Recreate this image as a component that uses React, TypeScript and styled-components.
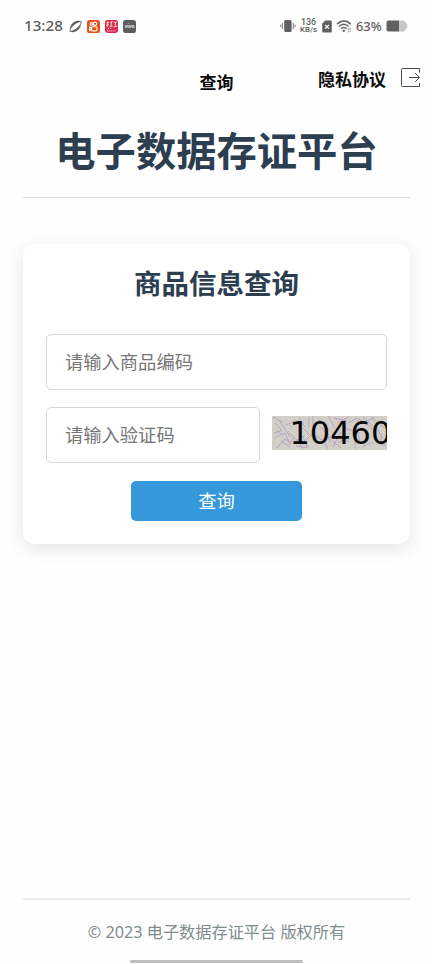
import React from "react";
import styled, { createGlobalStyle } from "styled-components";

const GlobalStyle = createGlobalStyle`
  * { box-sizing: border-box; }
  body { margin: 0; background: #fefefe; }
`;

const Screen = styled.div`
  width: 432px;
  height: 964px;
  display: flex;
  flex-direction: column;
  overflow: hidden;
  background: #fefefe;
  font-family: "Noto Sans", "Noto Sans CJK SC", sans-serif;
`;

const StatusBar = styled.header`
  height: 52px;
  padding: 0 24px 0 24px;
  display: flex;
  align-items: center;
  justify-content: space-between;
  color: #5c5c5c;
`;

const StatusGroup = styled.div<{ $gap: number }>`
  display: flex;
  align-items: center;
  gap: ${(p) => p.$gap}px;
  svg { display: block; flex: none; }
`;

const Clock = styled.span`
  font-size: 15.2px;
  line-height: 20px;
  font-weight: 500;
  width: 40px;
  padding-bottom: 2px;
  white-space: nowrap;
`;

const Speed = styled.div`
  width: 19px;
  display: flex;
  flex-direction: column;
  align-items: center;
  margin-left: -1px;
  font-family: Roboto, sans-serif;
  font-weight: 500;
  white-space: nowrap;
`;

const SpeedLine = styled.span<{ $size: number }>`
  display: block;
  height: 8px;
  font-size: ${(p) => p.$size}px;
  line-height: 8px;
`;

const Percent = styled.span`
  font-size: 12.9px;
  line-height: 18px;
  font-weight: 500;
  width: 26px;
  white-space: nowrap;
`;

const NavBar = styled.nav`
  height: 54px;
  padding: 0 11px 0 12px;
  display: grid;
  grid-template-columns: 1fr auto 1fr;
  font-family: "Noto Sans CJK SC", sans-serif;
  font-size: 17px;
  line-height: 24px;
  font-weight: 700;
  color: #0a0a0a;
`;

const NavTitle = styled.span`
  grid-column: 2;
  padding: 18px 0 0;
`;

const NavActions = styled.div`
  display: flex;
  justify-content: flex-end;
  gap: 15px;
  padding-top: 15px;
  white-space: nowrap;
  svg { display: block; flex: none; }
`;

const Page = styled.main`
  flex: 1;
  display: flex;
  flex-direction: column;
  padding: 0 22px 0 23px;
  font-family: "Noto Sans CJK SC", sans-serif;
`;

const Title = styled.h1`
  margin: 0;
  height: 92px;
  padding-top: 14px;
  border-bottom: 1px solid #dcdcdc;
  text-align: center;
  font-size: 40.3px;
  line-height: 58px;
  font-weight: 700;
  color: #2c3e50;
  white-space: nowrap;
`;

const Card = styled.section`
  margin-top: 46px;
  height: 300px;
  padding: 18px 23px 23px;
  border-radius: 12px;
  background: #fff;
  box-shadow: 0 5px 17px rgba(0, 0, 0, 0.1);
  display: flex;
  flex-direction: column;
`;

const CardTitle = styled.h2`
  margin: 0 0 32px;
  text-align: center;
  font-size: 27.5px;
  line-height: 40px;
  font-weight: 700;
  color: #2c3e50;
`;

const Field = styled.input<{ $width: number }>`
  width: ${(p) => p.$width}px;
  height: 56px;
  padding: 0 18px 2px;
  border: 1px solid #d8d8d8;
  border-radius: 5px;
  outline: none;
  background: #fff;
  font-family: "Noto Sans CJK SC", sans-serif;
  font-size: 18.3px;
  &::placeholder { color: #767676; opacity: 1; }
`;

const CaptchaRow = styled.div`
  display: flex;
  align-items: center;
  justify-content: space-between;
  margin: 17px 0 18px;
`;

const Submit = styled.button`
  align-self: center;
  width: 171px;
  height: 40px;
  padding: 0 0 3px;
  border: 0;
  border-radius: 5px;
  background: #3498db;
  color: #fff;
  font-family: "Noto Sans CJK SC", sans-serif;
  font-size: 18.3px;
  line-height: 26px;
`;

const Footer = styled.footer`
  margin-top: auto;
  height: 66px;
  padding-top: 20px;
  border-top: 2px solid #ebebeb;
  text-align: center;
  font-family: "Noto Sans", "Noto Sans CJK SC", sans-serif;
  font-size: 16.2px;
  line-height: 24px;
  color: #7f8c8d;
  white-space: nowrap;
`;

const HomeIndicator = styled.div`
  width: 173px;
  height: 3px;
  margin: -4px auto 1px;
  border-radius: 2px;
  background: #bfbfbf;
`;

const CaptchaImage = styled.svg`
  display: block;
  margin-top: -4px;
`;

const OrbitIcon = () => (
  <svg width="13" height="13" viewBox="0 0 13 13" fill="#606060">
    <path d="M1.1 9.5C.7 6.2 3.3 2.6 6.8 1.3 8.9.6 11 .7 12.4 1.5 8.2 2.3 4.1 4.9 1.1 9.5Z" />
    <path d="M11.9 3.5C12.3 6.8 9.7 10.4 6.2 11.7 4.1 12.4 2 12.3.6 11.5 4.8 10.7 8.9 8.1 11.9 3.5Z" />
    <path d="M1.4 9.2.8 11.4M11.7 3.8l.6-2.2" stroke="#606060" strokeWidth="1" />
  </svg>
);

const VideoAppIcon = () => (
  <svg width="13" height="13" viewBox="0 0 13 13">
    <rect width="13" height="13" rx="2.6" fill="#e8511c" />
    <g fill="none" stroke="#fff" strokeWidth="1.15">
      <circle cx="4.6" cy="3.9" r="1.35" />
      <circle cx="8" cy="3.7" r="1.65" />
      <rect x="4.5" y="6.7" width="5.4" height="4.1" rx="1.1" />
      <path d="M4.4 8.1 2.7 7.1v3.4l1.7-.9" />
    </g>
  </svg>
);

const ShopAppIcon = () => (
  <svg width="13" height="13" viewBox="0 0 13 13">
    <rect width="13" height="13" rx="2.4" fill="#db2950" />
    <path d="M1.5 3.2 4 2.4M2.8 1.2 2.2 7M1.2 5.5l2.9-.9M5 2.4l3-.8M6.5 1.5 6 6.2M4.8 6.5l3-.6M8.8 2.2h3M10.5 2l-.3 4.6M8.5 7l3.5-.8M4 8 2.5 9M6 7.8 5 9" stroke="#ffe3c5" strokeWidth=".95" fill="none" />
    <path d="M2 10.9h9" stroke="#f39cad" strokeWidth="1.1" strokeDasharray="1.3 .5" />
  </svg>
);

const VivoAppIcon = () => (
  <svg width="13" height="13" viewBox="0 0 13 13">
    <rect width="13" height="13" rx="2.8" fill="#5d5d5d" />
    <text x="6.5" y="8" textAnchor="middle" fontFamily="Inter, sans-serif" fontWeight="600" fontSize="4.8" fill="#fff">vivo</text>
  </svg>
);

const VibrateIcon = () => (
  <svg width="16" height="14" viewBox="0 0 16 14">
    <rect x="4.2" y="1" width="7.4" height="12" rx="1.6" fill="#606060" />
    <path d="M.8 5.6v2.8M2.6 4v6M13.2 4v6M15 5.6v2.8" stroke="#777" strokeWidth="1" />
  </svg>
);

const SimIcon = () => (
  <svg width="10" height="13" viewBox="0 0 10 13">
    <path d="M3.3.5h5A1.4 1.4 0 0 1 9.8 2v9a1.4 1.4 0 0 1-1.5 1.5H1.7A1.4 1.4 0 0 1 .2 11V3.6Z" fill="#606060" />
    <path d="m3.1 4.9 3.8 3.8m0-3.8L3.1 8.7" stroke="#fff" strokeWidth="1.2" />
  </svg>
);

const WifiIcon = () => (
  <svg width="16" height="13" viewBox="0 0 16 13" fill="none">
    <path d="M1 4.2C5-.1 11-.1 14.6 4.2M3 6.6c3-3.1 6.7-3.1 9.6 0M5.1 8.8c1.8-1.8 3.8-1.8 5.5 0" stroke="#606060" strokeWidth="1.5" />
    <path d="m7.8 12.3-1.7-1.9c1-.9 2.4-.9 3.4 0Z" fill="#606060" />
    <path d="M12.2 8.3v4M14 7.8v4" stroke="#858585" strokeWidth="1" strokeDasharray="2 1" />
  </svg>
);

const BatteryIcon = () => (
  <svg width="22" height="12" viewBox="0 0 22 12">
    <path d="M13 .5h4.6C19.2.5 19.5 1.5 19.7 3l1.6 1.3v3.4L19.7 9c-.2 1.7-.5 2.5-2.1 2.5H13Z" fill="#c7c7c7" />
    <path d="M3 .5h10v11H3A2.4 2.4 0 0 1 .5 9V3A2.4 2.4 0 0 1 3 .5Z" fill="#606060" />
  </svg>
);

const ExitIcon = () => (
  <svg width="20" height="21" viewBox="0 0 20 21" fill="none" stroke="#484848" strokeWidth="1">
    <path d="M18.5 5.5v-4h-17q-1 0-1 1v16q0 1 1 1h17V16" />
    <path d="M8 10.5h10.5M14.2 6.2l4.3 4.3-4.3 4.3" />
  </svg>
);

const Captcha = () => (
  <CaptchaImage width="115" height="34" viewBox="0 0 115 34">
    <rect width="115" height="34" fill="#d1cfc8" />
    <g fill="none" stroke="#b294c4" strokeWidth="1" opacity=".75">
      <path d="M1 1l9 5M3 7l7 8M7 4l6 9 5 8M2 17l7-2M2 22l11-5 4 9M5 32l8-9 7 5M14 9l9-4M17 17l10 9 4 7M22 26l9-6 4 12M24 30l12 2M5 14l7 6M9 25l9 6" />
      <path d="M27 2l6 9M37 1v10M41 0v11M31 12l10 10M34 24l8-8M29 23l8 8M42 19l10 6 4 8M46 3l11 11M56 0l7 12M47 10l9 8M53 9l5 17M55 21l12 1M60 25l9 7" />
      <path d="M62 2l13 3M65 7l12-6M76 7l9-5 7 4M71 12l12 3M68 16l8 10M66 27l11-7M61 31l7-14M84 9l4 16M89 7l13-5M91 1l10 9M95 8l10 10M90 31l11-5M100 1l5 6 8 5M103 10l8 12M104 26l10 4M109 18v11M17 29l5-8M83 17v16" />
    </g>
    <text x="17.5" y="28.4" fontFamily="DejaVu Sans, sans-serif" fontSize="32" fill="#080808">10460</text>
  </CaptchaImage>
);

export default function App() {
  return (
    <>
      <GlobalStyle />
      <Screen>
        <StatusBar>
          <StatusGroup $gap={5}>
            <Clock>13:28</Clock>
            <OrbitIcon />
            <VideoAppIcon />
            <ShopAppIcon />
            <VivoAppIcon />
          </StatusGroup>
          <StatusGroup $gap={4}>
            <VibrateIcon />
            <Speed>
              <SpeedLine $size={8.8}>136</SpeedLine>
              <SpeedLine $size={7.8}>KB/s</SpeedLine>
            </Speed>
            <SimIcon />
            <WifiIcon />
            <Percent>63%</Percent>
            <BatteryIcon />
          </StatusGroup>
        </StatusBar>
        <NavBar>
          <NavTitle>查询</NavTitle>
          <NavActions><span>隐私协议</span><ExitIcon /></NavActions>
        </NavBar>
        <Page>
          <Title>电子数据存证平台</Title>
          <Card>
            <CardTitle>商品信息查询</CardTitle>
            <Field $width={341} placeholder="请输入商品编码" />
            <CaptchaRow>
              <Field $width={214} placeholder="请输入验证码" />
              <Captcha />
            </CaptchaRow>
            <Submit>查询</Submit>
          </Card>
          <Footer>© 2023 电子数据存证平台 版权所有</Footer>
        </Page>
        <HomeIndicator />
      </Screen>
    </>
  );
}
